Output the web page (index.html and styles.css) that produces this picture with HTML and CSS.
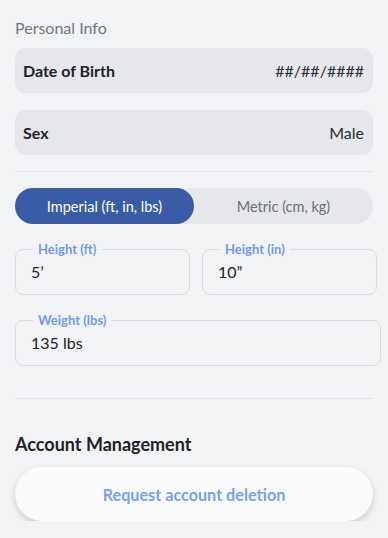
FILE: index.html
```html
<!DOCTYPE html>
<html>
<head>
<meta charset="utf-8">
<link rel="stylesheet" href="styles.css">
</head>
<body>
<div class="page">
  <div class="section-title">Personal Info</div>
  <div class="card">
    <span class="card-label">Date of Birth</span>
    <span class="card-value">##/##/####</span>
  </div>
  <div class="card card-second">
    <span class="card-label">Sex</span>
    <span class="card-value">Male</span>
  </div>
  <div class="divider divider-top"></div>
  <div class="toggle">
    <div class="toggle-opt active">Imperial (ft, in, lbs)</div>
    <div class="toggle-opt">Metric (cm, kg)</div>
  </div>
  <div class="field-row">
    <fieldset class="field">
      <legend>Height (ft)</legend>
      <div class="field-value">5’</div>
    </fieldset>
    <fieldset class="field">
      <legend>Height (in)</legend>
      <div class="field-value">10”</div>
    </fieldset>
  </div>
  <fieldset class="field field-wide">
    <legend>Weight (lbs)</legend>
    <div class="field-value">135 lbs</div>
  </fieldset>
  <div class="divider divider-bottom"></div>
  <div class="heading">Account Management</div>
  <button class="delete-btn">Request account deletion</button>
</div>
</body>
</html>
```
FILE: styles.css
```css
html, body {
  margin: 0;
  padding: 0;
  background: #f2f3f5;
}
body {
  font-family: "Lato", "Liberation Sans", sans-serif;
  color: #1f2128;
}
.page {
  padding: 18px 15px 0 15px;
  width: 358px;
}
.section-title {
  font-size: 16px;
  line-height: 19px;
  color: #71757d;
}
.card {
  margin-top: 11px;
  height: 45px;
  border-radius: 11px;
  background: #e6e7ea;
  display: flex;
  align-items: center;
  justify-content: space-between;
  padding: 0 9px 0 8px;
}
.card-second {
  margin-top: 17px;
}
.card-label {
  font-weight: 700;
  font-size: 16px;
  color: #1f2128;
}
.card-value {
  font-size: 16px;
  color: #2a2d33;
}
.divider {
  height: 1px;
  background: #e2e3e6;
}
.divider-top {
  margin-top: 16px;
}
.toggle {
  margin-top: 16px;
  height: 36px;
  border-radius: 18px;
  background: #e6e7ea;
  display: flex;
}
.toggle-opt {
  flex: 1;
  display: flex;
  align-items: center;
  justify-content: center;
  font-size: 14.5px;
  color: #6b6e75;
  border-radius: 18px;
}
.toggle-opt.active {
  background: #3a5ba6;
  color: #ffffff;
}
.field-row {
  margin-top: 18px;
  display: flex;
  gap: 12px;
  width: 362px;
}
.field {
  margin: 0;
  padding: 0 15px;
  border: 1px solid #dadbde;
  border-radius: 8px;
  min-width: 0;
  flex: 1;
}
.field legend {
  margin-left: 2px;
  padding: 0 5px;
  font-size: 13px;
  line-height: 14px;
  font-weight: 700;
  color: #729ae3;
}
.field-value {
  font-size: 16px;
  line-height: 20px;
  padding: 6px 0 12px 0;
  color: #1f2128;
}
.field-wide {
  margin-top: 18px;
  width: 334px;
}
.divider-bottom {
  margin-top: 32px;
}
.heading {
  margin-top: 34px;
  font-size: 18px;
  line-height: 22px;
  font-weight: 700;
  color: #1f2128;
}
.delete-btn {
  display: block;
  margin-top: 12px;
  width: 358px;
  height: 54px;
  border: none;
  border-radius: 27px;
  background: #f9fafb;
  box-shadow: 0 3px 6px rgba(0, 0, 0, 0.16);
  font-family: "Lato", "Liberation Sans", sans-serif;
  font-size: 16.2px;
  font-weight: 700;
  color: #7ca0e8;
}
```
